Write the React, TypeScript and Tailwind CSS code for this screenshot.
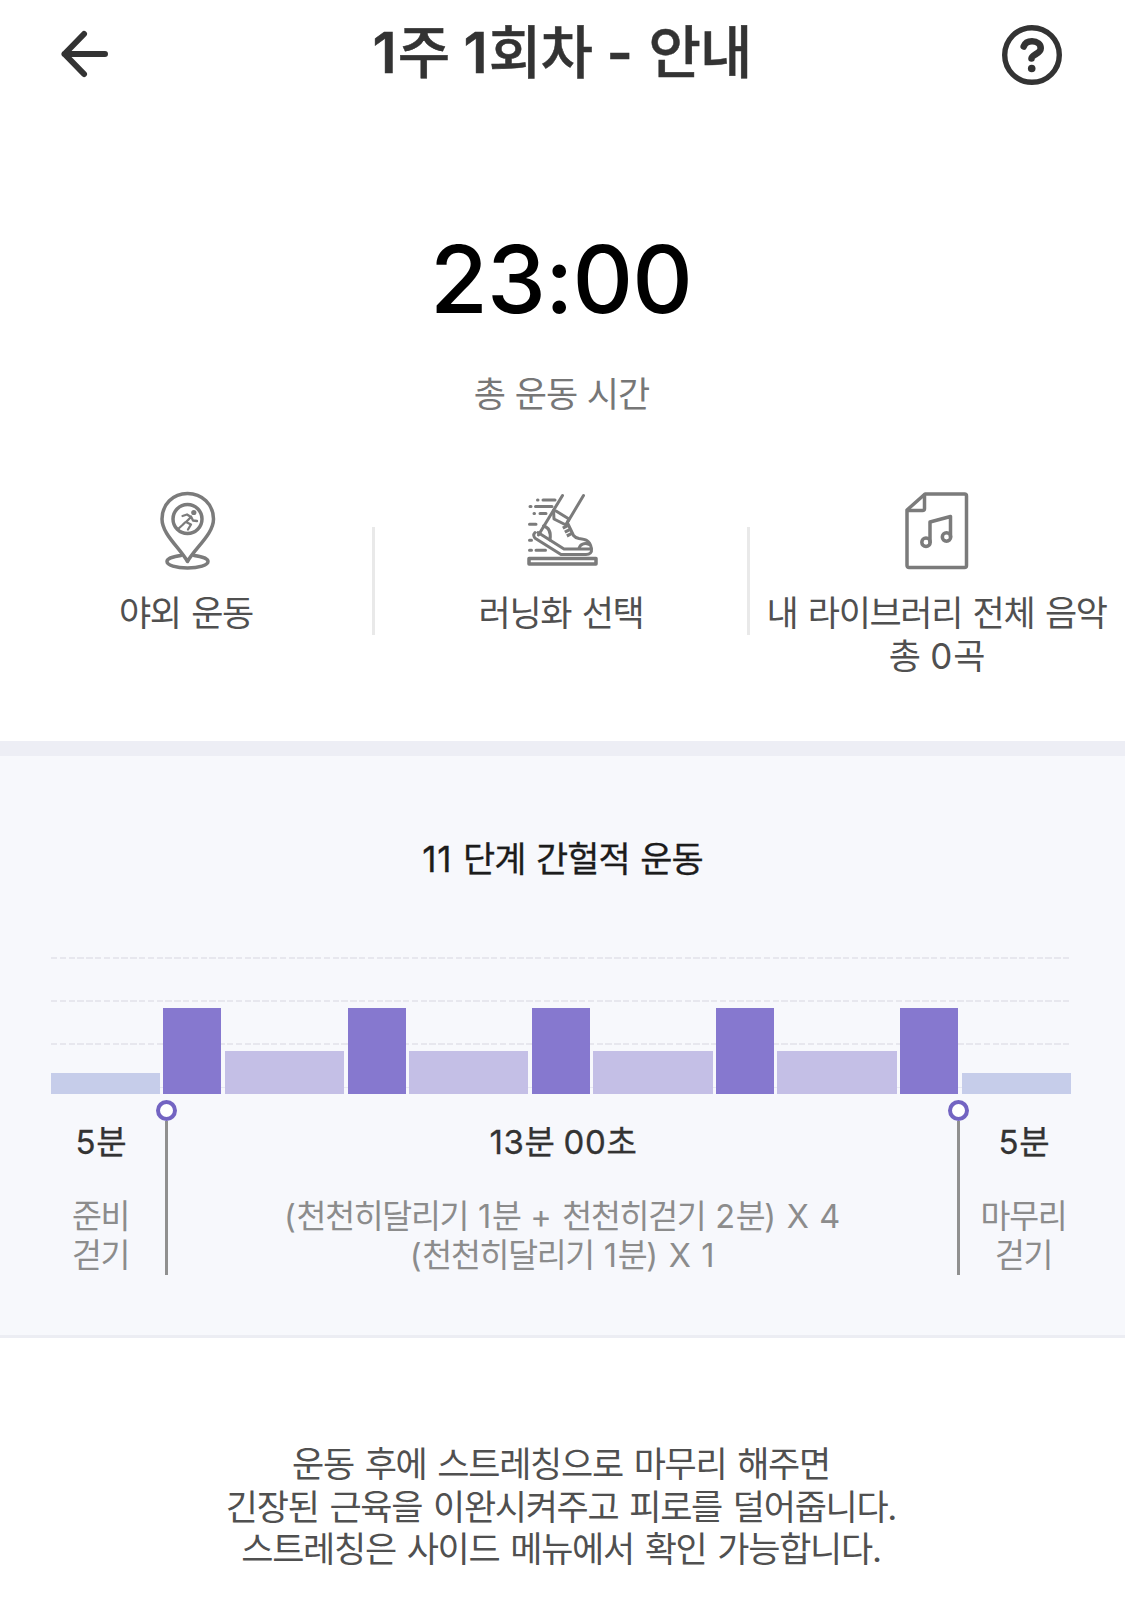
import React from "react";

const stroke = {
  fill: "none",
  stroke: "#7b7b7b",
  strokeWidth: 3.5,
  strokeLinecap: "round",
  strokeLinejoin: "round",
} as const;

function BackArrow() {
  return (
    <svg width="50" height="50" viewBox="0 0 50 50" fill="none" stroke="#333" strokeWidth="6" strokeLinecap="round" strokeLinejoin="round">
      <path d="M24 5L4.500 25 24 45M4.500 25H45" />
    </svg>
  );
}

function HelpIcon() {
  return (
    <svg className="mt-[2px]" width="60" height="60" viewBox="0 0 60 60" fill="none" stroke="#333" strokeLinecap="round" strokeLinejoin="round">
      <circle cx="30" cy="30" r="27.300" strokeWidth="5.400" />
      <path d="M21.700 21.500C23 18 26 16.300 30 16.300c5.300 0 8.700 2.800 8.700 6.900 0 5.800-9.200 6.200-9.200 10.300" strokeWidth="6.600" />
      <circle cx="29.700" cy="43.500" r="3.800" fill="#333" stroke="none" />
    </svg>
  );
}

function PinIcon() {
  return (
    <svg className="ml-[3px]" width="58" height="80" viewBox="0 0 58 80" {...stroke}>
      <path d="M28.500 70.500C20 56 3 43 3 28 3 13.500 14 2.500 28.500 2.500S54.500 13.500 54.500 28c0 15-17.500 28-26 42.500z" />
      <circle cx="28.500" cy="28" r="14.500" />
      <path d="M22 64.500c-8.500 1-14 3.300-14 6 0 3.700 9 6.500 20.500 6.500S49 74.200 49 70.500c0-2.700-5.500-5-14-6" />
      <circle cx="34.800" cy="21.500" r="2.600" fill="#7b7b7b" stroke="none" />
      <path d="M23.500 25l4.500-1.500 4 2.500-5 5 5 2.500-3 5M32 25.500l2 4 4 .500M26 31.500l-2.500 2.500L18.500 38.500" strokeWidth="2.300" />
    </svg>
  );
}

function ShoeIcon() {
  return (
    <svg className="mt-px ml-[3px]" width="72" height="74" viewBox="0 0 72 74" {...stroke} strokeWidth={3}>
      <path d="M35.500 3.500L11.500 43M56.500 3.500L39.500 32" />
      <path d="M26.500 18.500l.500 8.500 12 6 3-6L29 19" />
      <path d="M8 40.500c-2 2-1.500 4.500.5 6L34 62.500h25c4 0 6-2 5.500-5.500H37L11 40.500" />
      <path d="M16.500 34c6 1.500 7.500 7.500 6.500 14M41 32l5.500 11.500c1.500 2 3 2.500 5.500 3 6 .800 10.800 1.500 12.300 9.500M52 56.500c1-4.500 5.500-6 10-4" />
      <path d="M37.500 33.500l6 11.500" strokeWidth="5.500" strokeDasharray="3.200 1.200" strokeLinecap="butt" />
      <rect x="2" y="66.500" width="67" height="5.500" strokeWidth="3.500" />
      <path d="M10.500 8h.500M16 8h12M3 14.500h1M8.500 14.500H25M7 21.500h.500M13 21.500h6M2.500 32.300h6.500M2.500 48.200h2M2.500 58.200h2M9 58.200h9.500" />
    </svg>
  );
}

function MusicFileIcon() {
  return (
    <svg width="64" height="80" viewBox="0 0 64 80" {...stroke}>
      <path d="M20 3h39.500a2 2 0 0 1 2 2v69.500a2 2 0 0 1-2 2H4a2 2 0 0 1-2-2V19z" />
      <path d="M19.500 4v13.500a2 2 0 0 1-2 2H3" />
      <path d="M25 51V31l20.500-5.500V46" />
      <circle cx="21" cy="51.200" r="4.200" />
      <circle cx="41.500" cy="46" r="4.200" />
    </svg>
  );
}

/** Korean text whose Latin runs (digits, signs) take their own weight and tracking. */
function Mixed({ text, latin }: { text: string; latin: string }) {
  return (
    <>
      {text.split(/([0-9A-Z()+-]+)/).map((part, i) =>
        i % 2 ? (
          <span key={i} className={latin}>
            {part}
          </span>
        ) : (
          part
        ),
      )}
    </>
  );
}

function Option({ icon, lines }: { icon: React.ReactNode; lines: string[] }) {
  return (
    <div className="flex flex-col items-center whitespace-nowrap">
      <div className="flex h-20 items-start justify-center">{icon}</div>
      <div className="mt-[21px] text-center text-[35px] leading-[43px] tracking-[-0.038em] text-[#505050] [word-spacing:2px]">
        {lines.map((line) => (
          <div key={line}>
            <Mixed text={line} latin="tracking-[0.03em]" />
          </div>
        ))}
      </div>
    </div>
  );
}

const WALK = "h-[21px] w-[109px] bg-[#c6cdea]";
const RUN = "h-[86.5px] w-[58px] bg-[#8678cf]";
const SLOW = "h-[43px] flex-1 bg-[#c4bfe6]";
const bars = [WALK, RUN, SLOW, RUN, SLOW, RUN, SLOW, RUN, SLOW, RUN, WALK];

function Dashes() {
  return (
    <div className="h-[2px] w-[1018px] bg-[repeating-linear-gradient(90deg,#e7e7ee_0px,#e7e7ee_6.300px,transparent_6.300px,transparent_8.800px)]" />
  );
}

function Marker() {
  return (
    <div className="flex w-[21px] flex-col items-center">
      <div className="size-[21px] rounded-full border-4 border-[#7364c2] bg-white" />
      <div className="h-[154px] w-[3px] bg-[#909090]" />
    </div>
  );
}

function Phase({ time, lines }: { time: string; lines: string[] }) {
  return (
    <div className="flex flex-col items-center whitespace-nowrap pt-[20px] text-center">
      <div className="text-[33px] leading-[44px] tracking-[-0.04em] text-[#333] [word-spacing:2px] [-webkit-text-stroke:0.3px]">
        <Mixed text={time} latin="tracking-[0.02em]" />
      </div>
      <div className="mt-[33px] text-[32.5px] leading-[39px] tracking-[-0.04em] text-[#8c8c8c] [word-spacing:2px]">
        {lines.map((line) => (
          <div key={line}>
            <Mixed text={line} latin="tracking-[0.02em]" />
          </div>
        ))}
      </div>
    </div>
  );
}

export default function App() {
  return (
    <div className="h-[1613px] w-[1125px] overflow-hidden bg-white font-[Inter,'Noto_Sans_CJK_KR',sans-serif]">
      <header className="grid h-[108px] grid-cols-[62px_1fr_62px] items-center pr-[61px] pl-[60px]">
        <BackArrow />
        <h1 className="-mt-[2px] text-center text-[57px] leading-[70px] font-medium tracking-[-0.015em] text-[#333] [-webkit-text-stroke:0.5px]">
          <Mixed text="1주 1회차 - 안내" latin="font-semibold tracking-[0.02em]" />
        </h1>
        <HelpIcon />
      </header>

      <section className="flex h-[633px] flex-col items-center">
        <div className="mt-[113px] pr-[3px] text-[94px] leading-[116px] font-medium tracking-[-0.01em] text-black">23:00</div>
        <div className="mt-[35px] pr-[2px] text-[35px] leading-[44px] tracking-[-0.03em] text-[#777] [word-spacing:1px]">총 운동 시간</div>
        <div className="mt-[75px] grid w-full grid-cols-[372px_3px_372px_3px_373px]">
          <Option icon={<PinIcon />} lines={["야외 운동"]} />
          <div className="mt-[36px] h-[108px] bg-[#e9e9e9]" />
          <Option icon={<ShoeIcon />} lines={["러닝화 선택"]} />
          <div className="mt-[36px] h-[108px] bg-[#e9e9e9]" />
          <Option icon={<MusicFileIcon />} lines={["내 라이브러리 전체 음악", "총 0곡"]} />
        </div>
      </section>

      <section className="h-[597px] border-t-[15px] border-b-[3px] border-t-[#edeef5] border-b-[#ecedf3] bg-[#f7f8fc]">
        <h2 className="mt-[80px] text-center text-[35px] leading-[46px] tracking-[-0.03em] text-[#1c1c1c] [word-spacing:2px] [-webkit-text-stroke:0.3px]">
          <Mixed text="11 단계 간헐적 운동" latin="tracking-[0.02em]" />
        </h2>
        <div className="mt-[75px] ml-[51px] grid h-[137px] w-[1019.5px]">
          <div className="col-start-1 row-start-1 flex flex-col gap-[41.200px]">
            <Dashes />
            <Dashes />
            <Dashes />
            <div className="h-px bg-[#e8e8f2]" />
          </div>
          <div className="col-start-1 row-start-1 flex items-end gap-[3.400px]">
            {bars.map((bar, i) => (
              <div key={i} className={bar} />
            ))}
          </div>
        </div>
        <div className="mt-[6px] grid grid-cols-[156px_21px_771px_21px_109px] [&>*:first-child]:pl-[45px]">
          <Phase time="5분" lines={["준비", "걷기"]} />
          <Marker />
          <Phase time="13분 00초" lines={["(천천히달리기 1분 + 천천히걷기 2분) X 4", "(천천히달리기 1분) X 1"]} />
          <Marker />
          <Phase time="5분" lines={["마무리", "걷기"]} />
        </div>
      </section>

      <p className="pt-[105px] pr-[3px] text-center text-[35px] leading-[42.500px] tracking-[-0.037em] text-[#505050] [word-spacing:2.3px]">
        운동 후에 스트레칭으로 마무리 해주면
        <br />
        긴장된 근육을 이완시켜주고 피로를 덜어줍니다.
        <br />
        스트레칭은 사이드 메뉴에서 확인 가능합니다.
      </p>
    </div>
  );
}
